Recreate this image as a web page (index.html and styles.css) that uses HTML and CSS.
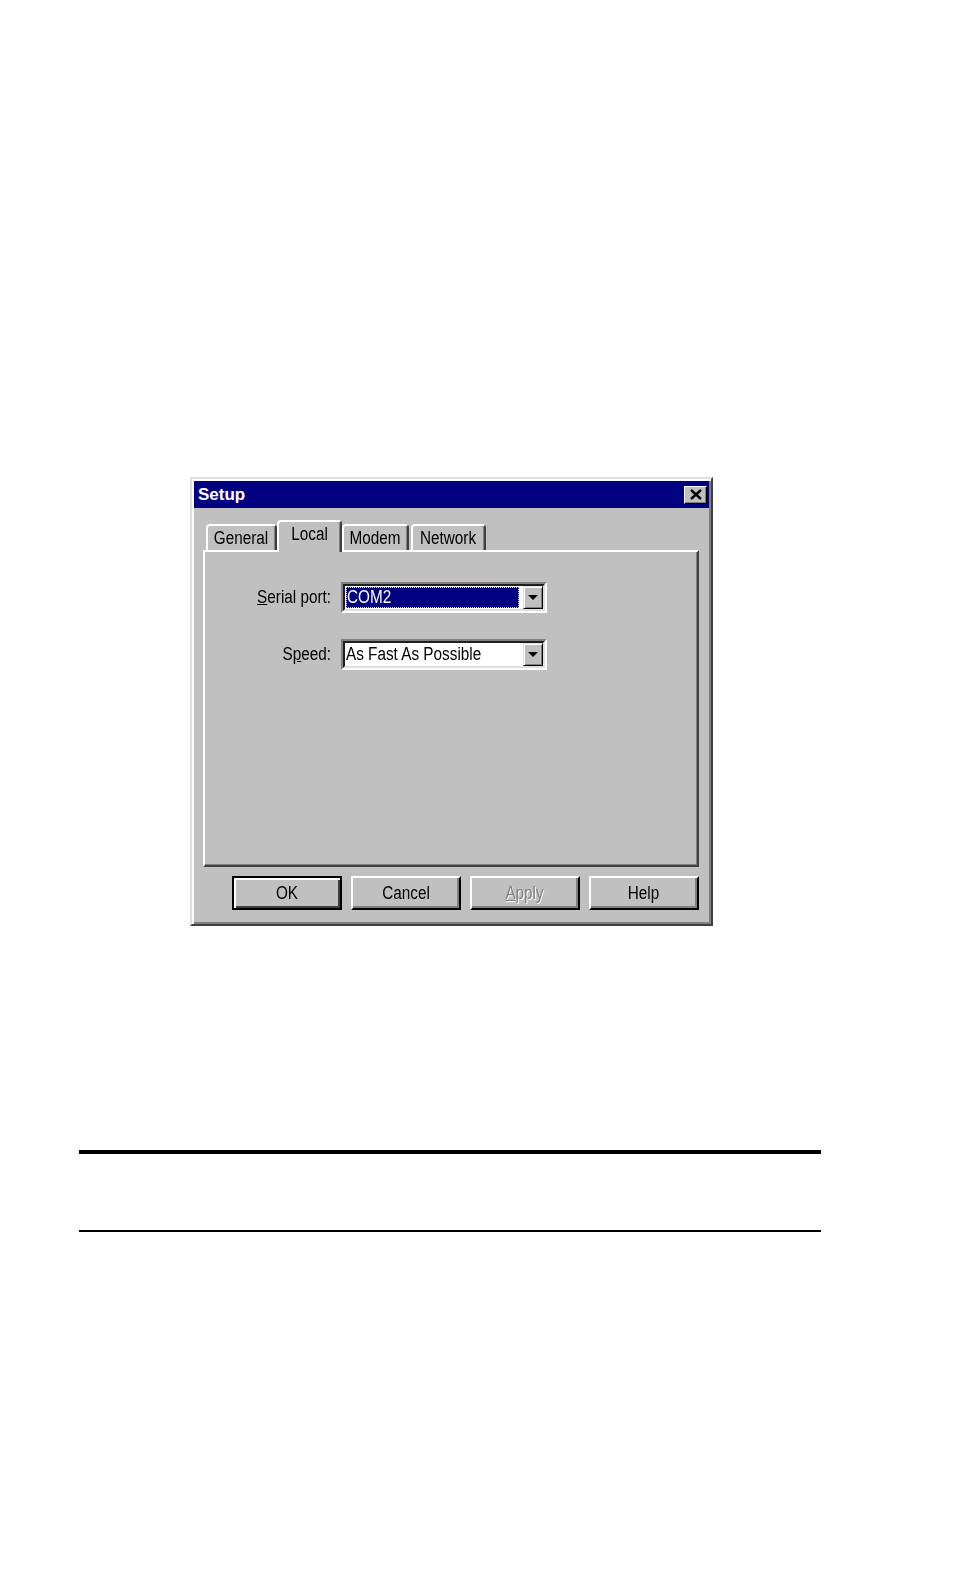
FILE: index.html
```html
<!DOCTYPE html>
<html>
<head>
<meta charset="utf-8">
<title>Setup</title>
<link rel="stylesheet" href="styles.css">
</head>
<body>
<div class="page">
  <div class="dialog">
    <div class="titlebar">
      <span class="title">Setup</span>
      <span class="close"><svg width="14" height="11" viewBox="0 0 14 11"><path d="M2 1 L12 10 M12 1 L2 10" stroke="#000" stroke-width="2.4" fill="none"/></svg></span>
    </div>
    <div class="body">
      <div class="tabs">
        <div class="tab tab-general"><span class="txt">General</span></div>
        <div class="tab tab-active"><span class="txt">Local</span></div>
        <div class="tab tab-modem"><span class="txt">Modem</span></div>
        <div class="tab tab-network"><span class="txt">Network</span></div>
      </div>
      <div class="panel">
        <div class="form">
          <span class="label"><span class="txt txt-right"><u>S</u>erial port:</span></span>
          <div class="combo">
            <div class="combo-inner">
              <span class="value value-selected"><span class="txt txt-left">COM2</span></span>
              <span class="drop"><svg width="10" height="5" viewBox="0 0 10 5"><polygon points="0,0 10,0 5,5" fill="#000"/></svg></span>
            </div>
          </div>
          <span class="label"><span class="txt txt-right">S<u>p</u>eed:</span></span>
          <div class="combo">
            <div class="combo-inner">
              <span class="value"><span class="txt txt-left">As Fast As Possible</span></span>
              <span class="drop"><svg width="10" height="5" viewBox="0 0 10 5"><polygon points="0,0 10,0 5,5" fill="#000"/></svg></span>
            </div>
          </div>
        </div>
      </div>
      <div class="buttons">
        <button class="btn btn-default"><span class="txt">OK</span></button>
        <button class="btn"><span class="txt">Cancel</span></button>
        <button class="btn btn-disabled"><span class="txt"><u>A</u>pply</span></button>
        <button class="btn"><span class="txt">Help</span></button>
      </div>
    </div>
  </div>
  <hr class="rule rule-thick">
  <hr class="rule rule-thin">
</div>
</body>
</html>
```

FILE: styles.css
```css
body {
  margin: 0;
  background: #ffffff;
  font-family: "Liberation Sans", Arial, sans-serif;
  color: #000;
}

.page {
  padding-top: 477px;
}

.txt {
  display: inline-block;
  white-space: nowrap;
  transform: scaleX(0.85);
}

.txt-right {
  transform-origin: right center;
}

.txt-left {
  transform-origin: left center;
}

.dialog {
  width: 523px;
  height: 449px;
  box-sizing: border-box;
  margin-left: 190px;
  background: #c0c0c0;
  border: 2px solid;
  border-color: #dfdfdf #404040 #404040 #dfdfdf;
  padding: 2px;
  box-shadow: inset 2px 2px #ffffff, inset -2px -2px #808080;
}

.titlebar {
  height: 27px;
  background: #000080;
  display: flex;
  align-items: center;
  justify-content: space-between;
  padding: 0 2px 0 4px;
}

.title {
  color: #ffffff;
  font-weight: bold;
  font-size: 17px;
}

.close {
  width: 23px;
  height: 18px;
  box-sizing: border-box;
  background: #c0c0c0;
  border: 1px solid;
  border-color: #ffffff #000000 #000000 #ffffff;
  box-shadow: inset -1px -1px #808080;
  display: flex;
  align-items: center;
  justify-content: center;
}

.body {
  padding: 0 10px 0 9px;
}

.tabs {
  height: 42px;
  display: flex;
  align-items: flex-end;
  padding-left: 3px;
}

.tab {
  height: 26px;
  box-sizing: border-box;
  border: 2px solid #ffffff;
  border-bottom: 0;
  border-right-color: #404040;
  border-radius: 4px 4px 0 0;
  box-shadow: inset -1px 0 #808080;
  font-size: 18px;
  display: flex;
  align-items: center;
  justify-content: center;
  background: #c0c0c0;
}

.tab-general {
  width: 71px;
}

.tab-modem {
  width: 67px;
}

.tab-network {
  width: 75px;
  margin-left: 2px;
}

.tab-active {
  width: 65px;
  height: 32px;
  margin-bottom: -2px;
  padding-bottom: 5px;
  position: relative;
  z-index: 1;
}

.panel {
  height: 317px;
  box-sizing: border-box;
  border: 2px solid;
  border-color: #ffffff #404040 #404040 #ffffff;
  box-shadow: inset -1px -1px #808080;
  padding-top: 30px;
}

.form {
  display: grid;
  grid-template-columns: 126px 206px;
  column-gap: 10px;
  row-gap: 26px;
  align-items: center;
}

.label {
  text-align: right;
  font-size: 18px;
}

.combo {
  height: 31px;
  box-sizing: border-box;
  border: 2px solid;
  border-color: #808080 #ffffff #ffffff #808080;
  background: #ffffff;
}

.combo-inner {
  height: 100%;
  box-sizing: border-box;
  border: 2px solid;
  border-color: #202020 #dfdfdf #dfdfdf #202020;
  display: flex;
  align-items: stretch;
}

.value {
  flex: 1;
  display: flex;
  align-items: center;
  padding-left: 1px;
  font-size: 18px;
}

.value-selected {
  background: #000080;
  color: #ffffff;
  margin: 1px 4px 1px 1px;
  border: 1px dotted #e8e070;
  padding-left: 0;
}

.drop {
  width: 20px;
  box-sizing: border-box;
  background: #c0c0c0;
  border: 1px solid;
  border-color: #dfdfdf #000000 #000000 #dfdfdf;
  box-shadow: inset 1px 1px #ffffff, inset -1px -1px #808080;
  display: flex;
  align-items: center;
  justify-content: center;
}

.buttons {
  display: flex;
  justify-content: flex-end;
  gap: 9px;
  margin-top: 9px;
}

.btn {
  width: 110px;
  height: 34px;
  box-sizing: border-box;
  padding: 0;
  background: #c0c0c0;
  border: 2px solid;
  border-color: #ffffff #000000 #000000 #ffffff;
  box-shadow: inset -2px -2px #808080;
  font-family: inherit;
  font-size: 18px;
  color: #000;
  display: flex;
  align-items: center;
  justify-content: center;
}

.btn-default {
  border-color: #000000;
  box-shadow: inset 2px 2px #ffffff, inset -2px -2px #404040;
}

.btn-disabled {
  color: #808080;
  text-shadow: 1px 1px #ffffff;
}

.rule {
  border: 0;
  margin: 0;
  margin-left: 79px;
  width: 742px;
  background: #000000;
}

.rule-thick {
  height: 4px;
  margin-top: 224px;
}

.rule-thin {
  height: 2px;
  margin-top: 76px;
}
```
